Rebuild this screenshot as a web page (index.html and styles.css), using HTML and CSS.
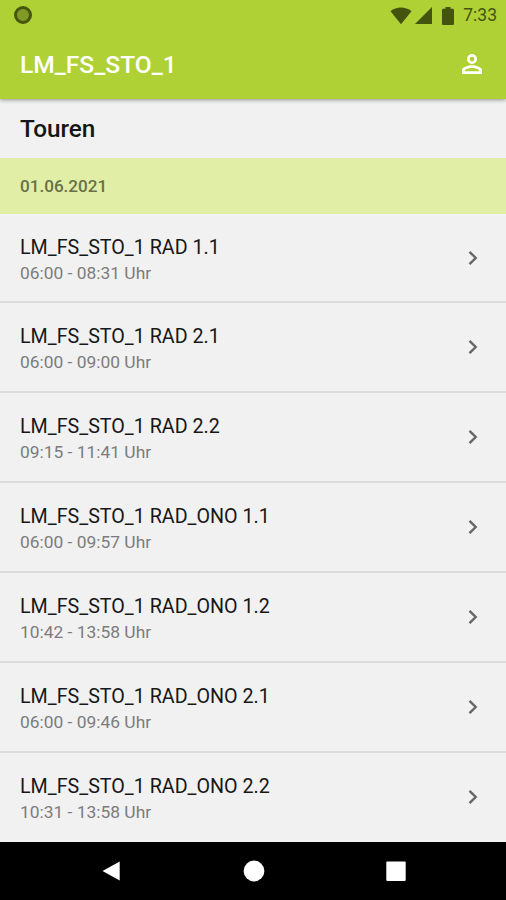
FILE: index.html
```html
<!DOCTYPE html>
<html lang="de">
<head>
  <meta charset="UTF-8">
  <meta name="viewport" content="width=device-width, initial-scale=1.0">
  <title>Touren</title>
  <link rel="stylesheet" href="styles.css">
</head>
<body>

  <header class="header">
    <div class="status-bar">
      <span class="status-dot"></span>
      <div class="status-icons">
        <svg class="wifi" width="22" height="18" viewBox="0 0 22 18"><path d="M0.5 4.2C6.5-.6 15.5-.6 21.5 4.2L11 17.3z"/></svg>
        <svg class="signal" width="17" height="17" viewBox="0 0 17 17"><path d="M17 0v17H0z"/></svg>
        <svg class="battery" width="12" height="18" viewBox="0 0 12 18"><path d="M3.5 0h5v1.8h2.2c.7 0 1.3.6 1.3 1.3v13.6c0 .7-.6 1.3-1.3 1.3H1.3C.6 18 0 17.4 0 16.7V3.1c0-.7.6-1.3 1.3-1.3h2.2z"/></svg>
        <span class="clock">7:33</span>
      </div>
    </div>
    <div class="app-bar">
      <h1>LM_FS_STO_1</h1>
      <svg class="user" width="30" height="30" viewBox="0 0 24 24"><path d="M12 6.100a1.900 1.900 0 1 1 0 3.800 1.900 1.900 0 0 1 0-3.800m0 9.100c2.970 0 5.800 1.260 5.800 1.900v.7H6.200v-.7c0-.64 2.830-1.900 5.800-1.900M12 4a4 4 0 1 0 0 8 4 4 0 0 0 0-8zm0 9c-2.670 0-8 1.340-8 4v3h16v-3c0-2.660-5.330-4-8-4z"/></svg>
    </div>
  </header>

  <main>
    <h2>Touren</h2>
    <div class="date">01.06.2021</div>

    <ul class="tours">
      <li>
        <div class="tour">
          <div class="name">LM_FS_STO_1 RAD 1.1</div>
          <div class="time">06:00 - 08:31 Uhr</div>
        </div>
        <svg class="arrow" width="10" height="16" viewBox="0 0 10 16"><path d="M1.5 1.8L7.7 8l-6.2 6.2"/></svg>
      </li>
      <li>
        <div class="tour">
          <div class="name">LM_FS_STO_1 RAD 2.1</div>
          <div class="time">06:00 - 09:00 Uhr</div>
        </div>
        <svg class="arrow" width="10" height="16" viewBox="0 0 10 16"><path d="M1.5 1.8L7.7 8l-6.2 6.2"/></svg>
      </li>
      <li>
        <div class="tour">
          <div class="name">LM_FS_STO_1 RAD 2.2</div>
          <div class="time">09:15 - 11:41 Uhr</div>
        </div>
        <svg class="arrow" width="10" height="16" viewBox="0 0 10 16"><path d="M1.5 1.8L7.7 8l-6.2 6.2"/></svg>
      </li>
      <li>
        <div class="tour">
          <div class="name">LM_FS_STO_1 RAD_ONO 1.1</div>
          <div class="time">06:00 - 09:57 Uhr</div>
        </div>
        <svg class="arrow" width="10" height="16" viewBox="0 0 10 16"><path d="M1.5 1.8L7.7 8l-6.2 6.2"/></svg>
      </li>
      <li>
        <div class="tour">
          <div class="name">LM_FS_STO_1 RAD_ONO 1.2</div>
          <div class="time">10:42 - 13:58 Uhr</div>
        </div>
        <svg class="arrow" width="10" height="16" viewBox="0 0 10 16"><path d="M1.5 1.8L7.7 8l-6.2 6.2"/></svg>
      </li>
      <li>
        <div class="tour">
          <div class="name">LM_FS_STO_1 RAD_ONO 2.1</div>
          <div class="time">06:00 - 09:46 Uhr</div>
        </div>
        <svg class="arrow" width="10" height="16" viewBox="0 0 10 16"><path d="M1.5 1.8L7.7 8l-6.2 6.2"/></svg>
      </li>
      <li>
        <div class="tour">
          <div class="name">LM_FS_STO_1 RAD_ONO 2.2</div>
          <div class="time">10:31 - 13:58 Uhr</div>
        </div>
        <svg class="arrow" width="10" height="16" viewBox="0 0 10 16"><path d="M1.5 1.8L7.7 8l-6.2 6.2"/></svg>
      </li>
    </ul>
  </main>

  <nav class="nav-bar">
    <svg width="22" height="22" viewBox="0 0 22 22"><path d="M18.7 1.5v19L1.5 11z"/></svg>
    <svg width="22" height="22" viewBox="0 0 22 22"><circle cx="11" cy="11" r="10.4"/></svg>
    <svg width="22" height="22" viewBox="0 0 22 22"><rect x="1.3" y="1.5" width="19.4" height="19.4" rx="1"/></svg>
  </nav>

</body>
</html>
```

FILE: styles.css
```css
* {
  box-sizing: border-box;
}

body {
  margin: 0;
  height: 900px;
  display: flex;
  flex-direction: column;
  overflow: hidden;
  background-color: #f1f1f1;
  font-family: Roboto, sans-serif;
}

svg {
  display: block;
}

.header {
  height: 99px;
  flex-shrink: 0;
  background-color: #afd136;
  box-shadow: 0 1px 4px rgba(0, 0, 0, 0.4);
}

.status-bar {
  height: 31px;
  padding: 0 9px 0 14px;
  display: flex;
  justify-content: space-between;
  align-items: center;
}

.status-dot {
  width: 18px;
  height: 18px;
  margin-bottom: 1px;
  border: 3px solid #46560f;
  border-radius: 50%;
  background-color: #7f9a27;
}

.status-icons {
  display: flex;
  align-items: center;
  color: #44540f;
}

.status-icons svg {
  fill: #44540f;
}

.signal {
  margin-left: 3px;
}

.battery {
  margin: 0 9px 0 10px;
}

.clock {
  font-size: 17.5px;
  line-height: 31px;
}

.app-bar {
  height: 68px;
  padding: 0 19px 2px 20px;
  display: flex;
  justify-content: space-between;
  align-items: center;
}

h1 {
  margin: 0;
  color: white;
  font-size: 24.6px;
  font-weight: 500;
}

.user {
  fill: white;
}

main {
  flex: 1;
  min-height: 0;
  overflow: hidden;
}

h2 {
  height: 59px;
  margin: 0;
  padding-left: 20px;
  color: #161616;
  font-size: 24.3px;
  font-weight: 500;
  line-height: 60px;
}

.date {
  height: 55.6px;
  padding-left: 20px;
  background-color: #e1eea6;
  color: #687047;
  font-size: 17.1px;
  font-weight: 500;
  line-height: 57px;
}

.tours {
  list-style: none;
  margin: 0;
  padding: 0;
}

.tours li {
  height: 89.85px;
  padding: 0 28px 0 20px;
  display: flex;
  justify-content: space-between;
  align-items: center;
  border-bottom: 2px solid #dcdcdc;
}

.tours li:last-child {
  border-color: transparent;
}

.tour {
  padding-top: 4px;
}

.name {
  color: #171717;
  font-size: 19.7px;
  line-height: 26px;
}

.time {
  color: #7c7c7c;
  font-size: 17.4px;
  line-height: 24px;
}

.arrow {
  fill: none;
  stroke: #666;
  stroke-width: 2.4;
}

.nav-bar {
  height: 58px;
  flex-shrink: 0;
  padding: 0 99px 0 101px;
  display: flex;
  justify-content: space-between;
  align-items: center;
  background-color: black;
}

.nav-bar svg {
  fill: white;
}
```
